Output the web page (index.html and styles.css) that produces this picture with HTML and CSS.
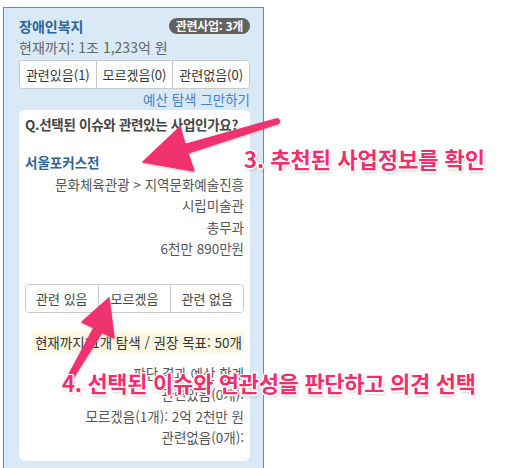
FILE: index.html
```html
<!DOCTYPE html>
<html lang="ko">
<head>
<meta charset="utf-8">
<title>예산 탐색</title>
<link rel="stylesheet" href="styles.css">
</head>
<body>
<div class="panel">
  <div class="head">
    <span class="title">장애인복지</span>
    <span class="badge">관련사업: 3개</span>
  </div>
  <div class="total">현재까지: 1조 1,233억 원</div>
  <div class="btn-group">
    <button class="btn">관련있음(1)</button>
    <button class="btn">모르겠음(0)</button>
    <button class="btn">관련없음(0)</button>
  </div>
  <div class="stop"><a class="link">예산 탐색 그만하기</a></div>
  <div class="card">
    <div class="question">Q.선택된 이슈와 관련있는 사업인가요?</div>
    <div class="project">서울포커스전</div>
    <div class="info">
      <div>문화체육관광 &gt; 지역문화예술진흥</div>
      <div>시립미술관</div>
      <div>총무과</div>
      <div>6천만 890만원</div>
    </div>
    <div class="btn-group card-btns">
      <button class="btn">관련 있음</button>
      <button class="btn">모르겠음</button>
      <button class="btn">관련 없음</button>
    </div>
    <div class="progress"><span class="progress-text">현재까지: 1개 탐색 / 권장 목표: 50개</span></div>
    <div class="summary">
      <div>판단 결과 예산 합계</div>
      <div>관련있음(0개):</div>
      <div>모르겠음(1개): 2억 2천만 원</div>
      <div>관련없음(0개):</div>
    </div>
  </div>
</div>

<svg class="arrows" width="526" height="468" viewBox="0 0 526 468">
  <defs>
    <filter id="sh" x="-20%" y="-20%" width="140%" height="140%">
      <feDropShadow dx="0" dy="1" stdDeviation="1" flood-color="#000" flood-opacity="0.25"/>
    </filter>
  </defs>
  <g fill="#f0306e" stroke="#f0306e" stroke-linejoin="round" stroke-width="1.5" filter="url(#sh)">
    <polygon points="143,162 180,127 185.2,144.5 277.3,118.6 279.5,120.5 278.7,123.4 187.8,153.1 194,171"/>
    <polygon points="109,298 82,322 94.1,327.7 67.8,376.7 70,379 72.2,379.3 101.9,332.3 114,338"/>
  </g>
</svg>
<div class="note note3">3. 추천된 사업정보를 확인</div>
<div class="note note4">4. 선택된 이슈와 연관성을 판단하고 의견 선택</div>
</body>
</html>
```

FILE: styles.css
```css
* { box-sizing: border-box; }
html, body { margin: 0; padding: 0; background: #fff; }
body {
  width: 526px;
  height: 468px;
  overflow: hidden;
  position: relative;
  font-family: "Noto Sans CJK KR", "Noto Sans", sans-serif;
  font-size: 13.5px;
  color: #555;
}
.panel {
  margin: 7px 0 0 3px;
  width: 261px;
  height: 470px;
  background: #d9e9f5;
  border: 1px solid #6d8aa5;
  border-bottom: none;
  padding: 8px 13px 0 15px;
}
.head {
  display: flex;
  justify-content: space-between;
  align-items: center;
  height: 20px;
}
.title {
  font-weight: bold;
  font-size: 14px;
  color: #2f6593;
}
.badge {
  background: #626262;
  color: #fff;
  font-weight: bold;
  font-size: 12px;
  line-height: 16px;
  height: 16px;
  padding: 0 7px;
  border-radius: 8px;
  letter-spacing: -0.3px;
}
.total {
  color: #666;
  font-size: 14px;
  line-height: 21px;
  margin-top: 1px;
}
.btn-group {
  display: flex;
  margin-top: 2px;
  height: 29px;
  border: 1px solid #c9c9c9;
  border-radius: 4px;
  background: #fff;
  overflow: hidden;
}
.btn {
  flex: 1;
  border: none;
  background: #fff;
  font-family: inherit;
  font-size: 13px;
  color: #333;
  padding: 0;
}
.btn + .btn { border-left: 1px solid #c9c9c9; }
.stop {
  text-align: right;
  line-height: 20px;
}
.link {
  color: #4584c4;
  font-size: 13.5px;
}
.card {
  margin-top: 1px;
  background: #fff;
  border-radius: 6px;
  padding: 4px 6px 10px 6px;
  height: 351px;
}
.question {
  font-weight: bold;
  color: #444;
  line-height: 20px;
  letter-spacing: -0.3px;
  white-space: nowrap;
}
.project {
  margin-top: 18px;
  font-weight: bold;
  color: #2f6593;
  line-height: 21.5px;
}
.info, .summary {
  text-align: right;
  color: #555;
  line-height: 21.5px;
}
.card-btns {
  margin-top: 24px;
}
.card-btns .btn { color: #444; }
.progress {
  margin-top: 18px;
  text-align: right;
  line-height: 22px;
}
.progress-text {
  display: inline-block;
  background: #fcf6e3;
  color: #333;
  padding: 0 2px 0 3px;
}
.summary {
  margin-top: 10px;
}
.arrows {
  position: absolute;
  left: 0;
  top: 0;
  pointer-events: none;
}
.note {
  position: absolute;
  color: #ee2f6c;
  font-weight: bold;
  font-size: 22px;
  white-space: nowrap;
  line-height: 26px;
  text-shadow:
    -1px -1px 0 #fff, 1px -1px 0 #fff, -1px 1px 0 #fff, 1px 1px 0 #fff,
    0 -1.5px 0 #fff, 0 1.5px 0 #fff, -1.5px 0 0 #fff, 1.5px 0 0 #fff,
    1px 2px 3px rgba(0,0,0,0.35);
}
.note3 { left: 244px; top: 145px; }
.note4 { left: 62px; top: 369px; letter-spacing: -0.3px; }
```
